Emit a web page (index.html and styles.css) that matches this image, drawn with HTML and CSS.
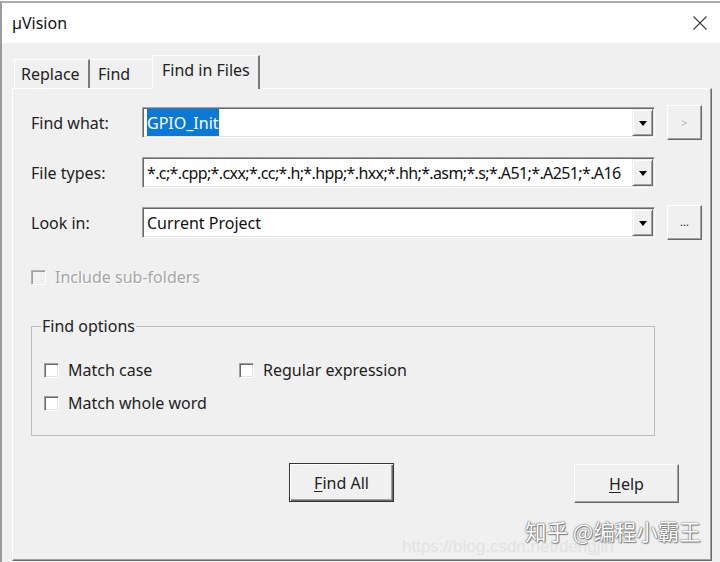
FILE: index.html
```html
<!DOCTYPE html>
<html>
<head>
<meta charset="utf-8">
<link rel="stylesheet" href="styles.css">
</head>
<body>
<div class="window">
  <div class="titlebar">
    <span class="title">µVision</span>
    <svg class="close" width="14" height="14" viewBox="0 0 14 14"><path d="M0.5 0.5 L13.5 13.5 M13.5 0.5 L0.5 13.5" stroke="#3a3a3a" stroke-width="1.1" fill="none"/></svg>
  </div>
  <div class="client">
    <div class="tabs">
      <div class="tab t-replace">Replace</div>
      <div class="tab t-find">Find</div>
      <div class="tab t-active">Find in Files</div>
    </div>
    <div class="panel">
      <div class="row">
        <span class="lbl">Find what:</span>
        <div class="combo">
          <div class="field"><span class="sel">GPIO_Init</span></div>
          <div class="drop"><span class="arrow"></span></div>
        </div>
        <div class="sbtn disabled">&gt;</div>
      </div>
      <div class="row">
        <span class="lbl">File types:</span>
        <div class="combo">
          <div class="field"><span class="txt tight">*.c;*.cpp;*.cxx;*.cc;*.h;*.hpp;*.hxx;*.hh;*.asm;*.s;*.A51;*.A251;*.A16</span></div>
          <div class="drop"><span class="arrow"></span></div>
        </div>
      </div>
      <div class="row">
        <span class="lbl">Look in:</span>
        <div class="combo">
          <div class="field"><span class="txt">Current Project</span></div>
          <div class="drop"><span class="arrow"></span></div>
        </div>
        <div class="sbtn dots">...</div>
      </div>
      <div class="check include disabled"><span class="box"></span><span>Include sub-folders</span></div>
      <fieldset class="group">
        <legend>Find options</legend>
        <div class="check"><span class="box"></span><span>Match case</span></div>
        <div class="check"><span class="box"></span><span>Regular expression</span></div>
        <div class="check"><span class="box"></span><span>Match whole word</span></div>
      </fieldset>
      <div class="buttons">
        <div class="pbtn default"><span><u>F</u>ind All</span></div>
        <div class="pbtn"><span><u>H</u>elp</span></div>
      </div>
    </div>
  </div>
  <div class="wm-url">https://blog.csdn.net/dengjin</div>
  <div class="wm">知乎 @编程小霸王</div>
</div>
</body>
</html>
```
FILE: styles.css
```css
* { box-sizing: border-box; }
html, body { margin: 0; padding: 0; background: #fff; }
body {
  width: 720px;
  height: 562px;
  overflow: hidden;
  font-family: "Noto Sans", "Noto Sans CJK SC", sans-serif;
  font-size: 16px;
  color: #1e1e1e;
}
.window {
  position: relative;
  margin-top: 1px;
  height: 561px;
  border-top: 2px solid #ababab;
  border-left: 2px solid #9c9c9c;
  display: flex;
  flex-direction: column;
}
.titlebar {
  height: 40px;
  flex: none;
  background: #fff;
  display: flex;
  align-items: center;
  justify-content: space-between;
  padding: 0 13px 0 10px;
}
.title { font-size: 16px; color: #111; }
.close { display: block; }
.client {
  flex: 1;
  background: #f0f0f0;
  padding: 12px 0 0 10px;
  display: flex;
  flex-direction: column;
}
.tabs {
  display: flex;
  align-items: flex-end;
  height: 33px;
  padding-left: 2px;
}
.tab {
  height: 29px;
  border-top: 1px solid #fff;
  border-left: 1px solid #fff;
  display: flex;
  align-items: center;
  line-height: 1;
  color: #222;
  padding-bottom: 1px;
}
.t-replace { width: 76px; padding-left: 6px; border-right: 2px solid #7a7a7a; }
.t-find { width: 62px; padding-left: 8px; border-left: none; }
.t-active {
  width: 108px;
  height: 34px;
  padding-left: 9px;
  padding-bottom: 5px;
  border-right: 2px solid #7a7a7a;
  margin-bottom: -1px;
  position: relative;
  z-index: 1;
  background: #f0f0f0;
}
.panel {
  width: 700px;
  height: 473px;
  border-top: 1px solid #fff;
  border-left: 1px solid #fff;
  border-right: 1px solid #6a6a6a;
  border-bottom: 1px solid #6a6a6a;
  box-shadow: inset -1px -1px 0 #a0a0a0;
  padding: 16px 0 0 18px;
}
.row {
  display: flex;
  align-items: center;
  height: 35px;
  margin-bottom: 15px;
}
.lbl { width: 111px; flex: none; color: #222; }
.combo {
  width: 513px;
  height: 31px;
  flex: none;
  display: flex;
  background: #fff;
  border: 1px solid;
  border-color: #a0a0a0 #fff #fff #a0a0a0;
  box-shadow: inset 1px 1px 0 #696969, inset -1px -1px 0 #e3e3e3;
  padding: 1px;
}
.field {
  flex: 1;
  min-width: 0;
  overflow: hidden;
  white-space: nowrap;
  display: flex;
  align-items: stretch;
  padding-left: 3px;
}
.sel {
  background: #0a78d7;
  color: #fff;
  display: flex;
  align-items: center;
}
.txt { display: flex; align-items: center; color: #111; }
.txt.tight { letter-spacing: -0.62px; }
.drop {
  width: 21px;
  flex: none;
  background: #f0f0f0;
  border-top: 1px solid #f0f0f0;
  border-left: 1px solid #f0f0f0;
  border-right: 1px solid #696969;
  border-bottom: 1px solid #696969;
  box-shadow: inset 1px 1px 0 #fff, inset -1px -1px 0 #a0a0a0;
  display: flex;
  align-items: center;
  justify-content: center;
}
.arrow {
  width: 0;
  height: 0;
  border-left: 4px solid transparent;
  border-right: 4px solid transparent;
  border-top: 5px solid #000;
  margin-top: 1px;
}
.sbtn {
  width: 35px;
  height: 35px;
  margin-left: 12px;
  background: #f0f0f0;
  border-top: 1px solid #fff;
  border-left: 1px solid #fff;
  border-right: 1px solid #696969;
  border-bottom: 1px solid #696969;
  box-shadow: inset -1px -1px 0 #a0a0a0;
  display: flex;
  align-items: center;
  justify-content: center;
  font-size: 11px;
}
.sbtn.disabled { color: #b0b0b0; text-shadow: 1px 1px 0 #fff; }
.sbtn.dots { color: #111; padding-bottom: 3px; }
.check {
  display: flex;
  align-items: center;
  height: 20px;
  color: #222;
}
.box {
  width: 15px;
  height: 15px;
  flex: none;
  margin-right: 9px;
  background: #fff;
  border: 1px solid;
  border-color: #a0a0a0 #fff #fff #a0a0a0;
  box-shadow: inset 1px 1px 0 #696969, inset -1px -1px 0 #e3e3e3;
}
.include {
  margin-top: 29px;
  height: 16px;
}
.check.disabled { color: #a6a6a6; text-shadow: 1px 1px 0 #fff; }
.check.disabled .box {
  background: #f0f0f0;
  box-shadow: inset 1px 1px 0 #a0a0a0;
  border-color: #b4b4b4 #fff #fff #b4b4b4;
}
.group {
  margin: 30px 0 0 0;
  width: 624px;
  border: 1px solid #bcbcbc;
  padding: 23px 12px 22px 12px;
  display: grid;
  grid-template-columns: 195px auto;
  row-gap: 13px;
  min-width: 0;
}
.group legend {
  padding: 0 1px;
  margin-left: -3px;
  line-height: 22px;
  color: #222;
}
.buttons {
  display: flex;
  margin-top: 27px;
  padding-left: 258px;
  gap: 180px;
  align-items: flex-start;
}
.pbtn {
  width: 105px;
  height: 39px;
  background: #f0f0f0;
  border-top: 1px solid #fff;
  border-left: 1px solid #fff;
  border-right: 1px solid #696969;
  border-bottom: 1px solid #696969;
  box-shadow: inset -1px -1px 0 #a0a0a0;
  display: flex;
  align-items: center;
  justify-content: center;
  color: #222;
  margin-top: 1px;
}
.pbtn.default {
  margin-top: 0;
  border: 1px solid #333;
  box-shadow: inset 1px 1px 0 #fff, inset -1px -1px 0 #696969, inset -2px -2px 0 #a0a0a0;
}
.pbtn u { text-decoration-thickness: 1px; text-underline-offset: 2px; }
.wm {
  position: absolute;
  left: 523px;
  top: 513px;
  font-family: "Noto Sans CJK SC", sans-serif;
  font-size: 21.5px;
  line-height: 30px;
  color: #fff;
  text-shadow: 0 0 1px #555, 0 0 2px #777, 1px 1px 1px #888;
  white-space: nowrap;
}
.wm-url {
  position: absolute;
  left: 400px;
  top: 533px;
  font-family: "Liberation Sans", sans-serif;
  font-size: 17px;
  line-height: 22px;
  color: #e2e2e2;
  white-space: nowrap;
}
```
